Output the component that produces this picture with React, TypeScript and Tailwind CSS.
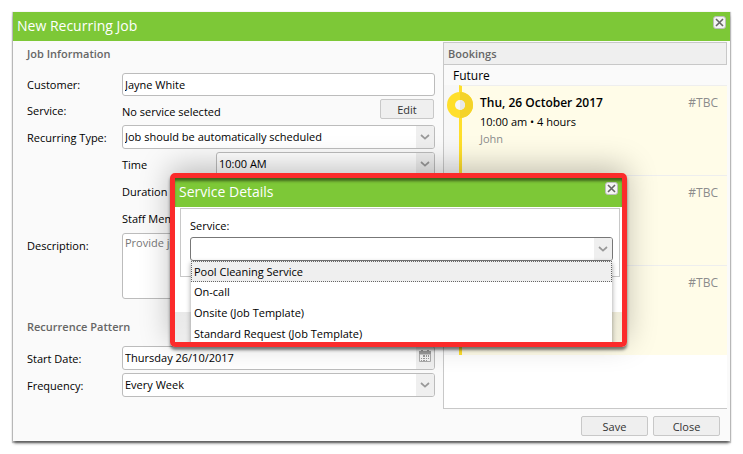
import { useState, type ReactNode } from "react";

const bookings = [
  { date: "Thu, 26 October 2017", time: "10:00 am • 4 hours", staff: "John", ref: "#TBC" },
  { date: "Thu, 2 November 2017", time: "10:00 am • 4 hours", staff: "John", ref: "#TBC" },
  { date: "Thu, 9 November 2017", time: "10:00 am • 4 hours", staff: "John", ref: "#TBC" },
];

const services = [
  "Pool Cleaning Service",
  "On-call",
  "Onsite (Job Template)",
  "Standard Request (Job Template)",
];

export default function App() {
  return (
    <div className="relative px-[13px] py-3 font-['Open_Sans',sans-serif] text-[11px] text-black">
      <main className="bg-[#fafafa] shadow-[0_3px_3px_-1px_rgba(0,0,0,0.6),0_1px_1px_1px_rgba(0,0,0,0.2)]">
        <TitleBar title="New Recurring Job" />

        <div className="flex pr-[3px]">
          <JobForm />
          <Bookings />
        </div>

        <footer className="flex justify-end gap-[5px] px-[10px] pt-[7px] pb-[5px]">
          <Button className="w-[67px]">Save</Button>
          <Button className="w-[67px]">Close</Button>
        </footer>
      </main>

      <ServiceDialog />
    </div>
  );
}

function TitleBar({ title, className = "" }: { title: string; className?: string }) {
  return (
    <header className={`flex h-[29px] items-start justify-between bg-[#7dc837] pr-[4px] pl-1 ${className}`}>
      <h1 className="text-[14px] leading-[28px] font-medium text-white">{title}</h1>
      <button
        aria-label="Close window"
        className="mt-[4px] flex size-[13px] items-center justify-center rounded-[3px] border border-[#bdbdbd] bg-[#f4f4f4]"
      >
        <svg viewBox="0 0 9 9" className="size-[9px]" fill="none" stroke="#666" strokeWidth="1.6">
          <path d="M1 1l7 7M8 1L1 8" />
        </svg>
      </button>
    </header>
  );
}

function Button({ children, className = "" }: { children: ReactNode; className?: string }) {
  return (
    <button
      className={`h-5 rounded-[2px] border border-[#c8c8c8] bg-[#efefef] text-[11px] leading-5 text-[#333] ${className}`}
    >
      {children}
    </button>
  );
}

function Chevron() {
  return (
    <svg viewBox="0 0 10 6" className="h-[6px] w-[10px]" fill="none" stroke="#999" strokeWidth="1.7">
      <path d="M1 1l4 3.6L9 1" />
    </svg>
  );
}

function Select({ id, value }: { id: string; value: string }) {
  return (
    <div className="relative h-6 flex-1">
      <select
        id={id}
        className="size-full appearance-none rounded-[3px] border border-[#bcbcbc] bg-white pl-[2px] text-[11px]"
      >
        <option>{value}</option>
      </select>
      <span className="pointer-events-none absolute inset-y-px right-px flex w-[18px] items-center justify-center rounded-r-[2px] bg-[#efefef]">
        <Chevron />
      </span>
    </div>
  );
}

function JobForm() {
  return (
    <form className="min-w-0 flex-1 pt-1 pr-2 pl-[14px]">
      <h2 className="mb-[10px] text-[11px] leading-[18px] font-semibold text-[#666]">Job Information</h2>

      <div className="grid grid-cols-[95px_1fr] items-center gap-y-[3px]">
        <label htmlFor="customer" className="pt-[2px]">Customer:</label>
        <input
          id="customer"
          defaultValue="Jayne White"
          className="h-[23px] w-full rounded-[3px] border border-[#bcbcbc] bg-white px-[2px] text-[11px]"
        />

        <span className="pt-[2px]">Service:</span>
        <div className="flex h-[23px] items-start justify-between pr-px">
          <span className="leading-[26px]">No service selected</span>
          <Button className="w-[54px]">Edit</Button>
        </div>

        <label htmlFor="type" className="pt-[2px]">Recurring Type:</label>
        <Select id="type" value="Job should be automatically scheduled" />

        <div className="col-start-2 flex items-center">
          <label htmlFor="time" className="w-[94px] pt-[2px]">Time</label>
          <Select id="time" value="10:00 AM" />
        </div>
        <span className="col-start-2 h-6 leading-[26px]">Duration</span>
        <span className="col-start-2 h-6 leading-[26px]">Staff Members</span>

        <label htmlFor="description" className="self-start pt-[5px]">Description:</label>
        <textarea
          id="description"
          placeholder="Provide job description"
          className="h-[66px] w-full resize-none rounded-[3px] border border-[#bcbcbc] bg-white px-[2px] text-[11px] leading-[18px] placeholder:text-[#777]"
        />
      </div>

      <h2 className="mt-[19px] mb-[10px] text-[11px] leading-[18px] font-semibold text-[#666]">
        Recurrence Pattern
      </h2>

      <div className="grid grid-cols-[95px_1fr] items-center gap-y-[3px]">
        <label htmlFor="start" className="pt-[2px]">Start Date:</label>
        <div className="flex h-6 overflow-hidden rounded-[3px] border border-[#bcbcbc] bg-white">
          <input id="start" defaultValue="Thursday 26/10/2017" className="min-w-0 flex-1 px-[2px] text-[11px]" />
          <button
            type="button"
            aria-label="Pick a date"
            className="flex w-[18px] items-center justify-center bg-[#efefef] pb-1"
          >
            <CalendarIcon />
          </button>
        </div>

        <label htmlFor="frequency" className="pt-[2px]">Frequency:</label>
        <Select id="frequency" value="Every Week" />
      </div>
    </form>
  );
}

function CalendarIcon() {
  return (
    <svg viewBox="0 0 12 12" className="size-3">
      <path fill="#999" d="M0 1h2V0h2v1h4V0h2v1h2v4H0z" />
      <path fill="#f4f4f4" stroke="#aaa" d="M.5 4.5v7h11v-7" />
      <path fill="#999" d="M0 1h12v3H0zM4 5h2v2H4zM7 5h1v2H7zM9 5h1v2H9zM2 8h1v1H2zM4 8h2v1H4zM7 8h1v1H7zM9 8h1v1H9zM2 10h1v1H2zM4 10h2v1H4zM7 10h1v1H7z" />
    </svg>
  );
}

function Bookings() {
  return (
    <section className="mt-px flex w-[284px] shrink-0 flex-col border-b border-l border-[#c8c8c8] bg-white pb-[53px]">
      <h2 className="h-[23px] border border-l-0 border-[#c8c8c8] bg-[#efefef] pl-1 text-[11px] leading-[22px] font-semibold text-[#666]">
        Bookings
      </h2>
      <h3 className="h-5 bg-[#fafafa] pl-[9px] text-[12px] leading-[22px]">Future</h3>
      <ul className="bg-[#f7f7f7]">
        {bookings.map((b, i) => (
          <li
            key={b.date}
            className="relative ml-[15px] h-[90px] border-t border-l-3 border-t-[#eee] border-l-[#ffdf2b] bg-[#fffce8] pt-[7px] pr-[9px] pl-[18px]"
          >
            {i === 0 && <TimelineMarker />}
            <div className="flex items-center justify-between">
              <strong className="text-[12px] leading-5 font-semibold">{b.date}</strong>
              <span className="text-[12px] text-[#8c8c8c]">{b.ref}</span>
            </div>
            <p className="leading-[17px]">{b.time}</p>
            <p className="leading-[17px] text-[#8c8c8c]">{b.staff}</p>
          </li>
        ))}
      </ul>
    </section>
  );
}

function TimelineMarker() {
  return (
    <svg viewBox="0 0 26 26" className="absolute top-[6px] -left-[15px] size-[26px]">
      <circle cx="13" cy="13" r="13" fill="#ffdf2b" />
      <path d="M13 0a13 13 0 0 1 0 26z" fill="#f4d329" />
      <circle cx="13" cy="13" r="5" fill="#f7f7f7" />
      <path d="M13 8a5 5 0 0 1 0 10z" fill="#e8e8e8" />
    </svg>
  );
}

function ServiceDialog() {
  const [selected, setSelected] = useState(services[0]);

  return (
    <div
      role="dialog"
      aria-label="Service Details"
      className="absolute top-[173px] right-[116px] left-[170px] h-[174px] rounded-[5px] border-5 border-[#fb2b2b] shadow-[0_3px_3px_rgba(0,0,0,0.5),0_-6px_30px_rgba(0,0,0,0.25)]"
    >
      <div className="relative h-full overflow-hidden bg-linear-to-b from-black/15 to-black/5">
        <div className="h-[134px] bg-white">
          <TitleBar title="Service Details" className="shadow-[inset_0_4px_3px_-1px_rgba(0,0,0,0.5)]" />

          <div className="mx-[2px] mt-px ml-[5px] h-[69px] border border-[#c8c8c8] px-[9px] pt-2">
            <label htmlFor="service" className="block leading-[18px]">Service:</label>
            <div className="relative mt-[2px] mr-[-3px] flex h-6 rounded-[3px] border border-[#777] bg-white">
              <input id="service" role="combobox" aria-expanded="true" className="min-w-0 flex-1 px-[3px] text-[11px]" />
              <button aria-label="Show services" className="flex w-[18px] items-center justify-center rounded-r-[2px] bg-[#efefef]">
                <Chevron />
              </button>
              <ul
                role="listbox"
                className="absolute inset-x-0 top-[23px] h-[90px] bg-white shadow-[0_2px_5px_rgba(0,0,0,0.4)]"
              >
                {services.map((s) => (
                  <li
                    key={s}
                    role="option"
                    aria-selected={s === selected}
                    onClick={() => setSelected(s)}
                    className={
                      s === selected
                        ? "h-[21px] border border-dotted border-[#666] bg-[#efefef] pl-[2px] leading-5"
                        : "h-[21px] pl-[3px] leading-5"
                    }
                  >
                    {s}
                  </li>
                ))}
              </ul>
            </div>
          </div>
        </div>
      </div>
    </div>
  );
}
